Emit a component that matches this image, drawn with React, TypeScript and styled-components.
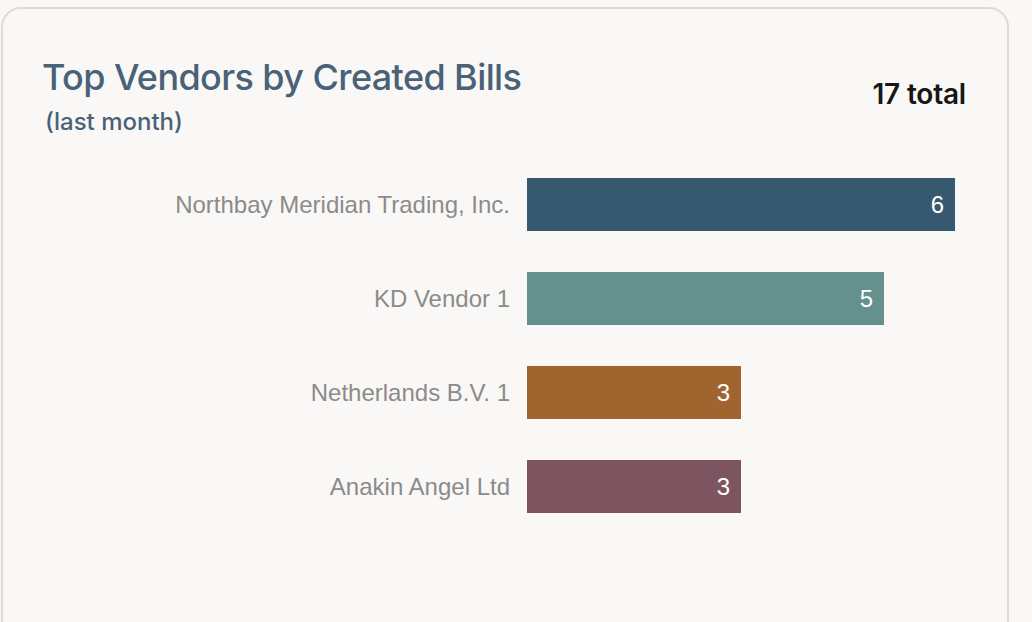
import React from 'react';
import styled, { createGlobalStyle } from 'styled-components';

const GlobalStyle = createGlobalStyle`
  html, body {
    margin: 0;
    padding: 0;
    background: #f9f8f6;
  }
  body {
    font-family: Inter, "Liberation Sans", sans-serif;
  }
`;

const Page = styled.div`
  padding: 7px 23px 0 1px;
  height: 622px;
  box-sizing: border-box;
  overflow: hidden;
`;

const Card = styled.section`
  background: #f9f8f6;
  border: 2px solid #dedcda;
  border-radius: 20px;
  padding: 46px 40px 80px 39px;
  min-height: 700px;
  box-sizing: border-box;
`;

const Header = styled.header`
  display: flex;
  justify-content: space-between;
  align-items: flex-start;
`;

const TitleBlock = styled.div`
  display: flex;
  flex-direction: column;
  gap: 8px;
`;

const Title = styled.h2`
  margin: 0;
  font-family: Inter, sans-serif;
  font-size: 36px;
  font-weight: 500;
  letter-spacing: -0.6px;
  line-height: 44px;
  color: #4a6277;
`;

const Subtitle = styled.span`
  font-family: Inter, sans-serif;
  font-size: 24px;
  font-weight: 500;
  line-height: 30px;
  color: #4a6277;
  padding-left: 3px;
`;

const Total = styled.div`
  font-family: Inter, sans-serif;
  font-size: 28px;
  font-weight: 600;
  letter-spacing: -0.2px;
  color: #171717;
  margin-top: 22px;
  padding-right: 1px;
`;

const Chart = styled.div`
  display: grid;
  grid-template-columns: 468px 1fr;
  column-gap: 17px;
  row-gap: 41px;
  align-items: center;
  margin-top: 41px;
`;

const Label = styled.span`
  font-family: "Liberation Sans", Arial, sans-serif;
  font-size: 24px;
  color: #8c8b89;
  text-align: right;
`;

const Bar = styled.div<{ $color: string }>`
  height: 53px;
  background: ${(p) => p.$color};
  display: flex;
  align-items: center;
  justify-content: flex-end;
  padding-right: 11px;
  box-sizing: border-box;
  font-family: "Liberation Sans", Arial, sans-serif;
  font-size: 24px;
  color: #ffffff;
`;

const vendors = [
  { name: 'Northbay Meridian Trading, Inc.', count: 6, color: '#365970' },
  { name: 'KD Vendor 1', count: 5, color: '#64908d' },
  { name: 'Netherlands B.V. 1', count: 3, color: '#a0652f' },
  { name: 'Anakin Angel Ltd', count: 3, color: '#7d5561' },
];

const UNIT = 428 / 6;

export default function App() {
  const total = vendors.reduce((s, v) => s + v.count, 0);
  return (
    <Page>
      <GlobalStyle />
      <Card>
        <Header>
          <TitleBlock>
            <Title>Top Vendors by Created Bills</Title>
            <Subtitle>(last month)</Subtitle>
          </TitleBlock>
          <Total>{total} total</Total>
        </Header>
        <Chart>
          {vendors.map((v) => (
            <React.Fragment key={v.name}>
              <Label>{v.name}</Label>
              <Bar $color={v.color} style={{ width: Math.round(v.count * UNIT) }}>
                {v.count}
              </Bar>
            </React.Fragment>
          ))}
        </Chart>
      </Card>
    </Page>
  );
}
